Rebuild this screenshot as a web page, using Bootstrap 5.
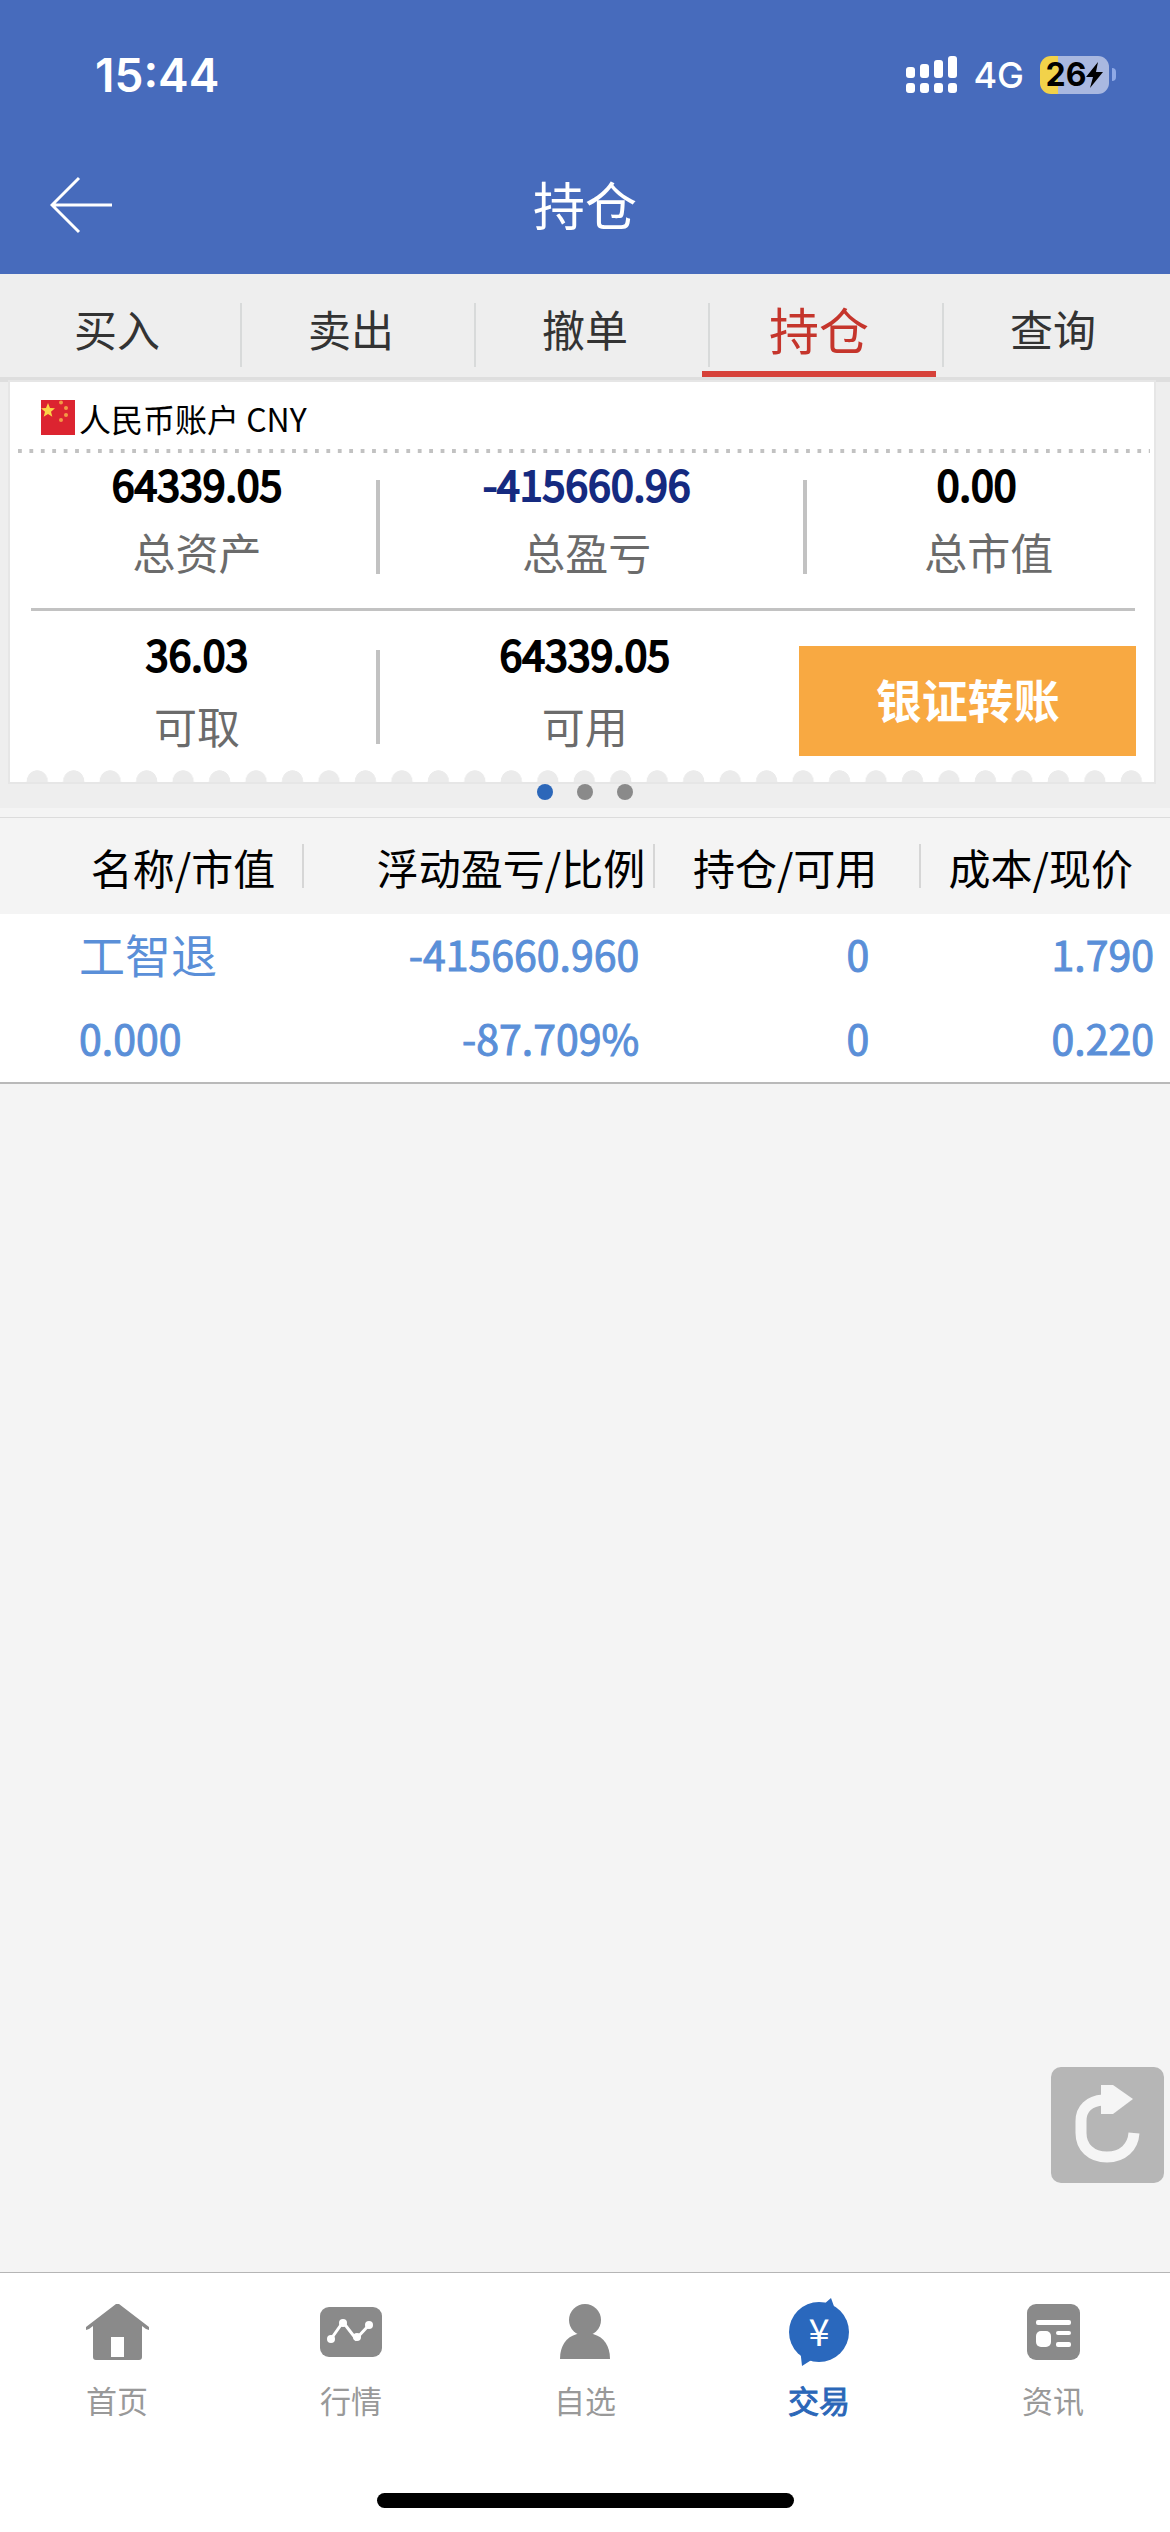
<!DOCTYPE html>
<html lang="zh-CN">
<head>
<meta charset="utf-8">
<meta name="viewport" content="width=device-width, initial-scale=1">
<title>持仓</title>
<link rel="stylesheet" href="https://cdn.jsdelivr.net/npm/bootstrap@5.3.0/dist/css/bootstrap.min.css">
<style>
  body { background: #f4f4f4; color: #000; font-family: "Noto Sans CJK SC", sans-serif; }
  a { text-decoration: none; }

  /* Blue header */
  .app-header { background: #476bbc; color: #fff; }
  .status-bar { height: 132px; padding: 17px 54px 0 95px; font-family: Inter, sans-serif; }
  .clock { font-size: 46px; font-weight: 600; line-height: 1; }
  .network { font-size: 36px; font-weight: 500; line-height: 1; margin: 0 16px; }
  .battery { width: 69px; height: 38px; border-radius: 11px; color: #000; font-size: 32px; font-weight: 700; line-height: 1;
    background: linear-gradient(90deg, #f2d24a 18px, #a9b8e0 18px); }
  .battery-tip { width: 4px; height: 13px; margin-left: 3px; border-radius: 0 6px 6px 0; background: #8fa9e6; }
  .title-bar { height: 142px; }
  .title-side { flex: 1 1 0; padding: 4px 50px 0; }
  .page-title { font-size: 52px; font-weight: 400; line-height: 60px; padding-top: 2px; }
  .back-btn { line-height: 0; }

  /* Trade tabs */
  .trade-tabs { background: #eee; border-bottom: 5px solid #dedede; }
  .trade-tabs .nav-link { height: 103px; padding: 0; border-radius: 0; color: #333; font-size: 43px; line-height: 108px; }
  .trade-tabs .nav-item + .nav-item .nav-link { background: linear-gradient(#d8dada, #d8dada) 6px 29px / 2px 64px no-repeat; }
  .trade-tabs .nav-link.active { color: #c5352c; font-size: 50px; border-bottom: 6px solid #d64139; }

  /* Account card */
  .account-area { background: #eee; }
  .account-card { margin: 0 16px 0 10px; background: #fff; box-shadow: 0 0 0 2px #e6e6e6; }
  .account-name { height: 67px; padding: 4px 31px 0; gap: 4px; font-size: 32px; line-height: 40px; }
  .dotted-rule { height: 4px; margin: 0 4px 0 8px; background: linear-gradient(90deg, #c2c2c2 4px, transparent 4px) 0 0 / calc(100% / 99) 4px; }
  .solid-rule { height: 3px; margin: 0 19px 0 21px; background: #c2c2c2; }
  .figures-top { height: 155px; padding-bottom: 7px; }
  .figures-bottom { height: 171px; }
  .figures-bottom .figure { padding-bottom: 16px; }
  .figures-bottom .figure-label { margin-top: 12px; }
  .figure-a { flex: 0 0 32%; padding-left: 8px; }
  .figure-b { flex: 0 0 37%; padding-right: 10px; }
  .figure-c { flex: 1 1 0; padding-left: 16px; }
  .figure-action { flex: 0 0 31%; padding: 8px 18px 0 0; }
  .figures-bottom .figure-b { flex: 1 1 0; }
  .figure-value { font-size: 41px; line-height: 60px; -webkit-text-stroke: 2px currentColor; }
  .figure-label { margin-top: 8px; color: #6b6b6b; font-size: 43px; line-height: 60px; }
  .loss { color: #152a80; }
  .bar-split { flex: 0 0 4px; height: 94px; background: #c2c2c2; }
  .transfer-btn { height: 110px; padding: 0 0 4px; border: 0; border-radius: 0; background: #f8a942; color: #fff; font-size: 46px; font-weight: 700; }
  .scallops { right: 4px; bottom: 0; left: 9px; height: 12px;
    background: radial-gradient(ellipse 11px 12px at 50% 100%, #ebebeb 95%, transparent) 0 0 / 37px 12px round; }
  .pager { height: 26px; padding-top: 2px; gap: 24px; }
  .pager button { width: 16px; height: 16px; padding: 0; border: 0; border-radius: 50%; background: #8a8a8a; }
  .pager button.current { background: #2c67b9; }

  /* Holdings */
  .holdings { margin-top: 9px; border-top: 1px solid #dcdcdc; border-bottom: 2px solid #b9b9b9; }
  .holdings table { table-layout: fixed; }
  .holdings th, .holdings td { padding: 0; white-space: nowrap; text-align: right; }
  .holdings th { height: 96px; font-size: 42px; font-weight: 400;
    background: linear-gradient(#d6d6d6, #d6d6d6) right center / 2px 44px no-repeat; }
  .holdings th:last-child { background: none; }
  .holdings tbody { background: #fff; color: #5a8fd8; }
  .holdings td { height: 84px; font-size: 41px; line-height: 78px; vertical-align: top; -webkit-text-stroke: 1px currentColor; }
  .holdings td:first-child { padding-left: 79px; text-align: left; }
  .holdings .stock-name { color: inherit; font-size: 46px; -webkit-text-stroke: 0; }
  .col-name { width: 26%; } .col-pnl { width: 30%; } .col-qty { width: 22.75%; }
  .holdings th.col-name { padding-right: 29px; }
  .holdings th.col-pnl { padding-right: 10px; }
  .holdings th.col-qty { padding-right: 44px; }
  .holdings th.col-price { padding-right: 37px; }
  .holdings td:nth-child(2) { padding-right: 16px; }
  .holdings td:nth-child(3) { padding-right: 52px; }
  .holdings td:nth-child(4) { padding-right: 16px; }

  .refresh-btn { right: 6px; bottom: 89px; width: 113px; height: 116px; padding: 0; border: 0; border-radius: 10px; background: #b6b6b6; line-height: 0; }

  /* Bottom navigation */
  .bottom-bar { background: #fff; border-top: 1px solid #b5b5b5; padding-bottom: 24px; }
  .bottom-bar .nav-link { padding: 25px 0 0; color: #999; font-size: 31px; line-height: 40px; }
  .bottom-bar .nav-link svg { display: block; margin: 0 auto 14px; color: #8a8a8a; }
  .bottom-bar .nav-link.active { color: #2b67b8; -webkit-text-stroke: 1px currentColor; }
  .bottom-bar .nav-link.active svg { color: #2a68bd; -webkit-text-stroke: 0; }
  .home-indicator { width: 417px; height: 15px; margin: 73px auto 0; border-radius: 8px; background: #000; }
</style>
<script src="https://cdn.jsdelivr.net/npm/bootstrap@5.3.0/dist/js/bootstrap.bundle.min.js"></script>
</head>
<body class="d-flex flex-column min-vh-100">

<header class="app-header">
  <div class="status-bar d-flex align-items-center">
    <span class="clock me-auto">15:44</span>
    <svg width="51" height="37" viewBox="0 0 51 37" fill="#fff" aria-hidden="true">
      <rect x="0" y="11" width="9" height="11" rx="3"/><rect x="14" y="8" width="9" height="14" rx="3"/>
      <rect x="28" y="4" width="9" height="18" rx="3"/><rect x="42" y="0" width="9" height="22" rx="3"/>
      <rect x="0" y="27" width="9" height="10" rx="3"/><rect x="14" y="27" width="9" height="10" rx="3"/>
      <rect x="28" y="27" width="9" height="10" rx="3"/><rect x="42" y="27" width="9" height="10" rx="3"/>
    </svg>
    <span class="network">4G</span>
    <span class="battery d-flex align-items-center justify-content-center">26<svg width="17" height="26" viewBox="0 0 17 26" aria-hidden="true"><path d="M12 0 0 15h7L4 26 17 10h-7z"/></svg></span>
    <span class="battery-tip"></span>
  </div>
  <div class="title-bar d-flex align-items-center">
    <div class="title-side">
      <button type="button" class="back-btn btn p-0 border-0" aria-label="返回">
        <svg width="62" height="58" viewBox="0 0 62 58" fill="none" stroke="#fff" stroke-width="3"><path d="M29 2 2 29l27 27M2 29h60"/></svg>
      </button>
    </div>
    <h1 class="page-title mb-0">持仓</h1>
    <div class="title-side"></div>
  </div>
</header>

<nav class="trade-tabs" aria-label="交易">
  <ul class="nav nav-fill nav-justified flex-nowrap">
    <li class="nav-item"><a class="nav-link" href="#">买入</a></li>
    <li class="nav-item"><a class="nav-link" href="#">卖出</a></li>
    <li class="nav-item"><a class="nav-link" href="#">撤单</a></li>
    <li class="nav-item"><a class="nav-link active" href="#" aria-current="page">持仓</a></li>
    <li class="nav-item"><a class="nav-link" href="#">查询</a></li>
  </ul>
</nav>

<main class="flex-grow-1 position-relative">
  <section class="account-area">
    <div class="account-card position-relative">
      <div class="account-name d-flex align-items-center">
        <svg width="34" height="35" viewBox="0 0 34 35" aria-hidden="true">
          <rect width="34" height="35" fill="#dc2430"/>
          <path fill="#fbd447" d="m7 3 2 5 5 .3-4 3.500 1.300 5L7 14l-4.300 2.800L4 11.800 0 8.300 5 8z"/>
          <g fill="#f39a45"><circle cx="20" cy="2.500" r="2"/><circle cx="25" cy="8" r="2"/><circle cx="25" cy="15" r="2"/><circle cx="20" cy="20" r="2"/></g>
        </svg>
        <span>人民币账户 CNY</span>
      </div>
      <div class="dotted-rule"></div>
      <div class="figures-top d-flex text-center">
        <div class="figure figure-a"><div class="figure-value">64339.05</div><div class="figure-label">总资产</div></div>
        <div class="bar-split align-self-center"></div>
        <div class="figure figure-b"><div class="figure-value loss">-415660.96</div><div class="figure-label">总盈亏</div></div>
        <div class="bar-split align-self-center"></div>
        <div class="figure figure-c"><div class="figure-value pe-4">0.00</div><div class="figure-label">总市值</div></div>
      </div>
      <div class="solid-rule"></div>
      <div class="figures-bottom d-flex align-items-center text-center">
        <div class="figure figure-a"><div class="figure-value">36.03</div><div class="figure-label">可取</div></div>
        <div class="bar-split"></div>
        <div class="figure figure-b"><div class="figure-value">64339.05</div><div class="figure-label">可用</div></div>
        <div class="figure-action"><button type="button" class="transfer-btn btn w-100">银证转账</button></div>
      </div>
      <div class="scallops position-absolute"></div>
    </div>
    <div class="pager d-flex justify-content-center">
      <button type="button" class="current" aria-label="第1页"></button>
      <button type="button" aria-label="第2页"></button>
      <button type="button" aria-label="第3页"></button>
    </div>
  </section>

  <section class="holdings">
    <table class="w-100">
      <thead>
        <tr>
          <th scope="col" class="col-name">名称/市值</th>
          <th scope="col" class="col-pnl">浮动盈亏/比例</th>
          <th scope="col" class="col-qty">持仓/可用</th>
          <th scope="col" class="col-price">成本/现价</th>
        </tr>
      </thead>
      <tbody>
        <tr><td><a class="stock-name" href="#">工智退</a></td><td>-415660.960</td><td>0</td><td>1.790</td></tr>
        <tr><td>0.000</td><td>-87.709%</td><td>0</td><td>0.220</td></tr>
      </tbody>
    </table>
  </section>

  <button type="button" class="refresh-btn position-absolute" aria-label="刷新">
    <svg width="113" height="116" viewBox="0 0 113 116" fill="none">
      <path d="M52 33C38 34 30 42 30 54v12c0 14 10 24 26 24s26-10 27-24" stroke="#f5f5f5" stroke-width="11"/>
      <path d="M50 18h12l20 14-20 15H50z" fill="#f5f5f5"/>
    </svg>
  </button>
</main>

<footer class="bottom-bar">
  <nav class="nav nav-justified flex-nowrap" aria-label="主导航">
    <a class="nav-link" href="#">
      <svg width="68" height="68" viewBox="0 0 68 68" fill="currentColor"><path d="M33 6h3l30 23v3l-3-1-4-3v31q0 3-3 3H13q-3 0-3-3V28l-4 3-3 1v-3z"/><path fill="#fff" d="M28 39h13v20H28z"/></svg>首页</a>
    <a class="nav-link" href="#">
      <svg width="68" height="68" viewBox="0 0 68 68" fill="currentColor"><rect x="3" y="9" width="62" height="50" rx="9"/><path d="m14 41 12-17 13 17 13-14" fill="none" stroke="#fff" stroke-width="3"/><g fill="#fff"><circle cx="14" cy="41" r="4"/><circle cx="26" cy="25" r="4"/><circle cx="40" cy="39" r="4"/><circle cx="52" cy="27" r="4"/></g></svg>行情</a>
    <a class="nav-link" href="#">
      <svg width="68" height="68" viewBox="0 0 68 68" fill="currentColor"><ellipse cx="34" cy="22" rx="16" ry="16"/><path d="M9 61c0-13 6-22 17-25h16c11 3 17 12 17 25z"/></svg>自选</a>
    <a class="nav-link active" href="#" aria-current="page">
      <svg width="68" height="68" viewBox="0 0 68 68" fill="currentColor"><ellipse cx="34" cy="34" rx="30" ry="30"/><path d="m38 7 8-7 5 14zM15 50l2 18 11-7z"/><text x="34" y="48" text-anchor="middle" font-size="38" font-weight="400" fill="#fff">¥</text></svg>交易</a>
    <a class="nav-link" href="#">
      <svg width="68" height="68" viewBox="0 0 68 68" fill="currentColor"><rect x="8" y="6" width="53" height="56" rx="9"/><g fill="#fff"><rect x="17" y="22" width="35" height="5" rx="2"/><rect x="17" y="33" width="15" height="16" rx="5"/><rect x="37" y="33" width="15" height="4" rx="2"/><rect x="37" y="44" width="15" height="5" rx="2"/></g></svg>资讯</a>
  </nav>
  <div class="home-indicator"></div>
</footer>

</body>
</html>
